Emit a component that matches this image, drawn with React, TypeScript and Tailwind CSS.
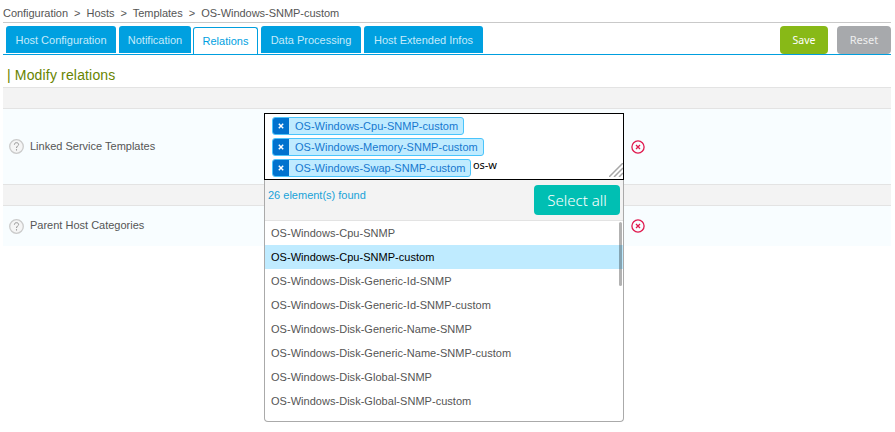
const tabs = [
  { label: 'Host Configuration', width: 'w-[110px]', active: false },
  { label: 'Notification', width: 'w-[72px]', active: false },
  { label: 'Relations', width: 'w-[65px]', active: true },
  { label: 'Data Processing', width: 'w-[100px]', active: false },
  { label: 'Host Extended Infos', width: 'w-[119px]', active: false },
];

const chips = [
  { label: 'OS-Windows-Cpu-SNMP-custom', width: 'w-[192px]' },
  { label: 'OS-Windows-Memory-SNMP-custom', width: 'w-[212px]' },
  { label: 'OS-Windows-Swap-SNMP-custom', width: 'w-[199px]' },
];

const options = [
  'OS-Windows-Cpu-SNMP',
  'OS-Windows-Cpu-SNMP-custom',
  'OS-Windows-Disk-Generic-Id-SNMP',
  'OS-Windows-Disk-Generic-Id-SNMP-custom',
  'OS-Windows-Disk-Generic-Name-SNMP',
  'OS-Windows-Disk-Generic-Name-SNMP-custom',
  'OS-Windows-Disk-Global-SNMP',
  'OS-Windows-Disk-Global-SNMP-custom',
];

function HelpIcon() {
  return (
    <svg className="size-[15px] shrink-0" viewBox="0 0 15 15" fill="none">
      <circle cx="7.5" cy="7.5" r="6.8" fill="#f5f5f5" stroke="#cbcbcb" strokeWidth="1.3" />
      <path d="M5.4 5.7C5.4 4.3 6.3 3.7 7.5 3.7S9.6 4.4 9.6 5.5C9.6 7 7.5 7 7.5 9" stroke="#939393" strokeWidth="1" />
      <path d="M7.5 10.2v1.3" stroke="#939393" strokeWidth="1.1" />
    </svg>
  );
}

function ClearIcon() {
  return (
    <svg className="size-[14px] shrink-0" viewBox="0 0 14 14" fill="none" stroke="#e0194e">
      <circle cx="7" cy="7" r="6.1" strokeWidth="1.3" />
      <path d="M5 5l4 4M9 5l-4 4" strokeWidth="1.3" />
    </svg>
  );
}

function SelectBox() {
  return (
    <div className="relative h-[67px] w-[360px] border border-black bg-white pt-[3px] pl-[7px]">
      <div className="flex flex-col gap-[3px]">
        {chips.map((chip, i) => (
          <div key={chip.label} className="flex h-[18px]">
            <div className={`${chip.width} flex overflow-hidden rounded-[3px] border border-[#4ac4fb] bg-[#bfebff]`}>
              <span className="flex w-4 shrink-0 items-center justify-center bg-[#0072ce]">
                <svg className="size-[6px]" viewBox="0 0 6 6" stroke="white" strokeWidth="1.5">
                  <path d="M.8.8l4.4 4.4M5.2.8L.8 5.2" />
                </svg>
              </span>
              <span className="pl-[6px] text-[11px] leading-4 tracking-[0.02px] whitespace-nowrap text-[#1678cf]">
                {chip.label}
              </span>
            </div>
            {i === 2 && (
              <span className="ml-[2px] font-['Noto_Sans',sans-serif] text-[11px] leading-[12px] tracking-[-0.1px] text-black">
                os-w
              </span>
            )}
          </div>
        ))}
      </div>
      <svg className="absolute right-0 bottom-[2px] h-[14px] w-[14px]" viewBox="0 0 14 14" stroke="#a7a7a7" strokeWidth="1.5">
        <path d="M0 14L14 0M5 14l9-9M10 14l4-4" />
      </svg>
    </div>
  );
}

function Dropdown() {
  return (
    <div className="absolute top-[67px] left-0 h-[242px] w-[360px] overflow-hidden rounded-b-[4px] border border-t-0 border-[#aaa] bg-white">
      <div className="flex h-[41px] justify-between border-b border-[#e3e3e3] bg-[#f3f3f3] pt-[5px] pr-[3px] pl-[3px]">
        <span className="pt-[2px] text-[11px] leading-4 text-[#18a2d8]">26 element(s) found</span>
        <button className="h-[30px] w-[86px] rounded-[4px] bg-[#00bfb3] font-['Noto_Sans',sans-serif] text-[15px] leading-[30px] font-light text-white">
          Select all
        </button>
      </div>
      <ul>
        {options.map((option, i) => (
          <li
            key={option}
            className={`h-6 pl-[6px] text-[11px] leading-6 tracking-[0.03px] ${i === 1 ? 'bg-[#bfebff] text-black' : 'text-[#555]'}`}
          >
            {option}
          </li>
        ))}
      </ul>
      <div className="absolute top-[42px] right-px h-16 w-[3px] rounded-full bg-black/30" />
    </div>
  );
}

export default function App() {
  return (
    <div className="h-[432px] w-[895px] overflow-hidden bg-white pr-1 pl-[3px] font-['Liberation_Sans',Arial,sans-serif] text-[11px] text-[#555]">
      <nav className="h-[23px] border-b border-[#c9c9c9] pt-[5px] leading-4 tracking-[-0.03px] whitespace-pre">
        {'Configuration  >  Hosts  >  Templates  >  OS-Windows-SNMP-custom'}
      </nav>
      <div className="flex h-8 justify-between border-b border-[#009fdf] pt-[3px]">
        <div className="flex gap-[3px] pl-[3px]">
          {tabs.map((tab) => (
            <div
              key={tab.label}
              className={`${tab.width} rounded-t-[3px] text-center whitespace-nowrap ${
                tab.active
                  ? '-ml-px mt-px h-[27px] border border-b-0 border-[#009fdf] bg-white leading-[27px] text-[#009fdf]'
                  : 'h-[27px] bg-[#00a0e0] leading-[29px] text-[#c5eafa]'
              }`}
            >
              {tab.label}
            </div>
          ))}
        </div>
        <div className="flex gap-[9px] font-['Noto_Sans',sans-serif] text-white">
          <button className="h-7 w-12 rounded-[4px] bg-[#88b917] text-[10.5px] leading-7">Save</button>
          <button className="h-7 w-[54px] rounded-[4px] bg-[#a7a9ac] text-[11px] leading-7 text-[#eee]">Reset</button>
        </div>
      </div>
      <h1 className="h-8 pt-[10px] pl-1 text-[14px] leading-5 tracking-[0.16px] text-[#688400]">| Modify relations</h1>
      <div className="h-[22px] border-y border-[#e3e3e3] bg-[#f3f3f3]" />
      <div className="flex h-[75px] bg-[#f8fdff]">
        <div className="flex w-[261px] items-center gap-[6px] pl-[6px]">
          <HelpIcon />
          <span>Linked Service Templates</span>
        </div>
        <div className="relative z-10 h-[67px] w-[360px] pt-[4px]">
          <div className="relative">
            <SelectBox />
            <Dropdown />
          </div>
        </div>
        <div className="flex items-center pl-[7px]">
          <ClearIcon />
        </div>
      </div>
      <div className="h-[22px] border-y border-[#e3e3e3] bg-[#f3f3f3]" />
      <div className="flex h-10 items-center bg-[#f8fdff]">
        <div className="flex w-[261px] items-center gap-[6px] pl-[6px]">
          <HelpIcon />
          <span className="pb-[2px]">Parent Host Categories</span>
        </div>
        <div className="w-[360px]" />
        <div className="pl-[7px]">
          <ClearIcon />
        </div>
      </div>
    </div>
  );
}
